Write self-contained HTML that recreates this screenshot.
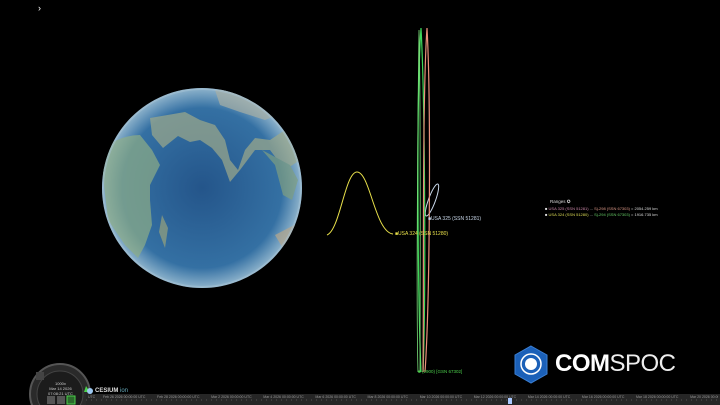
<!DOCTYPE html>
<html><head><style>
html,body{margin:0;padding:0;background:#000;width:720px;height:405px;overflow:hidden;font-family:"Liberation Sans",sans-serif;}
.t{position:absolute;white-space:nowrap;}
</style></head><body>
<div style="position:relative;width:720px;height:405px;overflow:hidden;">
<svg width="720" height="405" style="position:absolute;left:0;top:0">
<defs>
<radialGradient id="g" cx="50%" cy="50%" r="50%">
<stop offset="0" stop-color="#24558a"/>
<stop offset="0.8" stop-color="#3470a3"/>
<stop offset="1" stop-color="#8fb4cc"/>
</radialGradient>
<clipPath id="c"><circle cx="202" cy="188" r="100"/></clipPath>
</defs>
<circle cx="202" cy="188" r="100" fill="url(#g)"/>
<g clip-path="url(#c)" opacity="0.7">
<path d="M100 150 Q120 135 140 135 L152 150 L160 165 L150 185 L150 200 L152 225 L145 245 L138 258 L125 245 L108 220 Z" fill="#8fae87"/>
<path d="M150 118 L185 112 L200 120 L215 125 L225 140 L230 160 L238 170 L245 150 L255 138 L270 140 L285 130 L295 140 L300 160 L285 170 L270 150 L255 150 L240 170 L230 182 L222 160 L212 148 L200 140 L190 142 L178 136 L163 148 L152 135 Z" fill="#9eaa8a"/>
<path d="M215 90 L260 88 L290 110 L265 120 L240 112 L220 105 Z" fill="#a9b0a4"/>
<path d="M262 150 L275 165 L283 195 L292 200 L298 180 L290 165 Z" fill="#7f9f80"/>
<path d="M162 215 L168 228 L165 248 L159 232 Z" fill="#97a37c"/>
<path d="M275 235 L300 222 L305 255 L285 252 Z" fill="#b7a78c"/>
</g>
<circle cx="202" cy="188" r="99" fill="none" stroke="#a7c4d6" stroke-width="2" opacity="0.5"/>
<path d="M327 235 C340 230 345 172 357 172 C370 172 375 232 393 234" fill="none" stroke="#e8e04a" stroke-width="1"/>
<ellipse cx="432" cy="200" rx="3.5" ry="17" transform="rotate(20 432 200)" fill="none" stroke="#c9d8ea" stroke-width="1"/>
<path d="M421 372 C418 300 416 100 421 28 C425 100 426 300 423 372" fill="none" stroke="#3ed65a" stroke-width="1.2"/>
<path d="M423 372 C424 300 422 100 427 28 C431 100 430 300 425 372" fill="none" stroke="#e8907a" stroke-width="1.2"/>
<path d="M418 372 C416 300 418 100 419 30 C421 100 420 300 420 372" fill="none" stroke="#7be07a" stroke-width="0.8"/>
<circle cx="60" cy="394" r="30" fill="#2a2a2a" stroke="#555" stroke-width="2"/>
<circle cx="60" cy="394" r="23" fill="#1c1c1c" stroke="#444"/>
<rect x="36" y="372" width="8" height="8" fill="#444"/>
<rect x="47" y="396" width="8" height="8" fill="#555"/>
<rect x="57" y="396" width="8" height="8" fill="#555"/>
<rect x="67" y="396" width="8" height="8" fill="#2d6a2d" stroke="#4cd04c"/>
<path d="M86 386 L84 392 L90 392Z" fill="#4cd04c"/>
<rect x="86" y="394" width="634" height="11" fill="#262626"/>
<line x1="86" y1="400" x2="720" y2="400" stroke="#555" stroke-dasharray="1 4"/>
<rect x="508" y="398" width="4" height="6" fill="#aac8ff"/>
<polygon points="531,346 547,355 547,374 531,383 515,374 515,355" fill="#1b60b8" stroke="#3b7fd4"/>
<circle cx="531" cy="364" r="10" fill="none" stroke="#fff" stroke-width="1.5"/>
<circle cx="531" cy="364" r="6" fill="#fff"/>
<circle cx="90" cy="391" r="3" fill="#9cc8f0"/>
</svg>
<div class="t" style="left:38px;top:3px;color:#fff;font-size:9px;">›</div>
<div class="t" style="left:428px;top:216px;color:#c9d8ea;font-size:5px;">■USA 325 (SSN 51281)</div>
<div class="t" style="left:395px;top:231px;color:#e8e04a;font-size:5px;">■USA 324 (SSN 51280)</div>
<div class="t" style="left:418px;top:369px;color:#4cd04c;font-size:4.5px;">■ (2900) [GSN 67302]</div>
<div class="t" style="left:550px;top:199px;color:#ddd;font-size:4.5px;">Ranges ✪</div>
<div class="t" style="left:545px;top:206px;color:#ddd;font-size:4px;">■ <span style="color:#c8a">USA 325 (SSN 51281)</span> ... <span style="color:#d98">Sj-298 (SSN 67303)</span> = 2054.259 km</div>
<div class="t" style="left:545px;top:212px;color:#ddd;font-size:4px;">■ <span style="color:#dd5">USA 324 (SSN 51280)</span> ... <span style="color:#6c6">Sj-294 (SSN 67303)</span> = 1916.735 km</div>
<div class="t" style="left:555px;top:350px;color:#fff;font-size:24px;letter-spacing:-0.5px;"><b>COM</b><span style="font-weight:normal;color:#eee">SPOC</span></div>
<div class="t" style="left:48px;top:381px;color:#ccc;font-size:4px;line-height:5px;text-align:center;">1000x<br>Mar 14 2026<br>07:08:21 UTC</div>
<div class="t" style="left:95px;top:388px;color:#ddd;font-size:6px;font-weight:bold;">CESIUM <span style="color:#6ab;font-weight:normal">ion</span></div>
<div class="t" style="left:88px;top:395px;width:630px;overflow:hidden;color:#999;font-size:3.5px;">UTC&nbsp;&nbsp;&nbsp;&nbsp;&nbsp;&nbsp;&nbsp;&nbsp;Feb 26 2026 00:00:00 UTC&nbsp;&nbsp;&nbsp;&nbsp;&nbsp;&nbsp;&nbsp;&nbsp;&nbsp;&nbsp;&nbsp;&nbsp;Feb 28 2026 00:00:00 UTC&nbsp;&nbsp;&nbsp;&nbsp;&nbsp;&nbsp;&nbsp;&nbsp;&nbsp;&nbsp;&nbsp;&nbsp;Mar 2 2026 00:00:00 UTC&nbsp;&nbsp;&nbsp;&nbsp;&nbsp;&nbsp;&nbsp;&nbsp;&nbsp;&nbsp;&nbsp;&nbsp;Mar 4 2026 00:00:00 UTC&nbsp;&nbsp;&nbsp;&nbsp;&nbsp;&nbsp;&nbsp;&nbsp;&nbsp;&nbsp;&nbsp;&nbsp;Mar 6 2026 00:00:00 UTC&nbsp;&nbsp;&nbsp;&nbsp;&nbsp;&nbsp;&nbsp;&nbsp;&nbsp;&nbsp;&nbsp;&nbsp;Mar 8 2026 00:00:00 UTC&nbsp;&nbsp;&nbsp;&nbsp;&nbsp;&nbsp;&nbsp;&nbsp;&nbsp;&nbsp;&nbsp;&nbsp;Mar 10 2026 00:00:00 UTC&nbsp;&nbsp;&nbsp;&nbsp;&nbsp;&nbsp;&nbsp;&nbsp;&nbsp;&nbsp;&nbsp;&nbsp;Mar 12 2026 00:00:00 UTC&nbsp;&nbsp;&nbsp;&nbsp;&nbsp;&nbsp;&nbsp;&nbsp;&nbsp;&nbsp;&nbsp;&nbsp;Mar 14 2026 00:00:00 UTC&nbsp;&nbsp;&nbsp;&nbsp;&nbsp;&nbsp;&nbsp;&nbsp;&nbsp;&nbsp;&nbsp;&nbsp;Mar 16 2026 00:00:00 UTC&nbsp;&nbsp;&nbsp;&nbsp;&nbsp;&nbsp;&nbsp;&nbsp;&nbsp;&nbsp;&nbsp;&nbsp;Mar 18 2026 00:00:00 UTC&nbsp;&nbsp;&nbsp;&nbsp;&nbsp;&nbsp;&nbsp;&nbsp;&nbsp;&nbsp;&nbsp;&nbsp;Mar 20 2026 00:00:00 UTC&nbsp;&nbsp;&nbsp;&nbsp;&nbsp;&nbsp;&nbsp;&nbsp;Mar 22</div>
</div>
</body></html>
